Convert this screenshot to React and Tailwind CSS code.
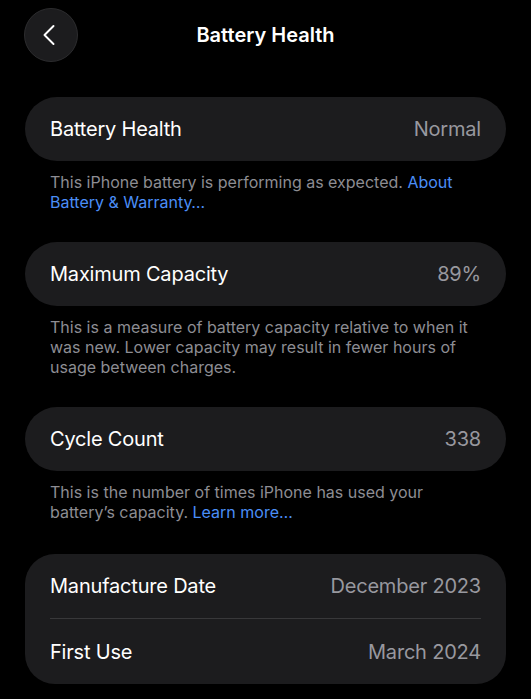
import { ChevronLeft } from 'lucide-react'

const font = { fontFamily: 'Inter, "Noto Sans", sans-serif' }

function Row({ label, value }) {
    return (
        <div className="flex items-center justify-between h-[64px] px-[25px]">
            <span className="text-[20px] text-white tracking-[-0.2px]">{label}</span>
            <span className="text-[20px] text-[#98989f] tracking-[-0.2px]">{value}</span>
        </div>
    )
}

function Footer({ children, last }) {
    return (
        <p className={`px-[25px] pt-[11px] text-[16px] leading-[20px] text-[#8d8d93] ${last ? 'pb-[32px]' : 'pb-[30px]'}`}>
            {children}
        </p>
    )
}

export default function App() {
    return (
        <div className="min-h-screen bg-black px-[25px]" style={font}>
            {/* HEADER */}
            <div className="relative flex items-center justify-center h-[70px]">
                <button className="absolute left-[-1px] top-[8px] w-[54px] h-[54px] rounded-full bg-[#1c1c1e] border border-[#2c2c2e] flex items-center justify-center">
                    <ChevronLeft className="text-white w-[36px] h-[36px] -ml-[4px]" strokeWidth={1.3} />
                </button>
                <h1 className="text-[20px] font-semibold text-white">Battery Health</h1>
            </div>

            <div className="pt-[27px]">
                <div className="bg-[#1c1c1e] rounded-full">
                    <Row label="Battery Health" value="Normal" />
                </div>
                <Footer>
                    This iPhone battery is performing as expected.{' '}
                    <span className="text-[#4b8ef7]">About Battery &amp; Warranty…</span>
                </Footer>

                <div className="bg-[#1c1c1e] rounded-full">
                    <Row label="Maximum Capacity" value="89%" />
                </div>
                <Footer>
                    This is a measure of battery capacity relative to when it was new. Lower capacity may result in fewer hours of usage between charges.
                </Footer>

                <div className="bg-[#1c1c1e] rounded-full">
                    <Row label="Cycle Count" value="338" />
                </div>
                <Footer last>
                    This is the number of times iPhone has used your battery’s capacity.{' '}
                    <span className="text-[#4b8ef7]">Learn more…</span>
                </Footer>

                <div className="bg-[#1c1c1e] rounded-[30px]">
                    <div className="h-[65px] flex items-center justify-between mx-[25px] border-b border-[#38383a]">
                        <span className="text-[20px] text-white tracking-[-0.2px]">Manufacture Date</span>
                        <span className="text-[20px] text-[#98989f] tracking-[-0.2px]">December 2023</span>
                    </div>
                    <div className="h-[65px] flex items-center justify-between mx-[25px]">
                        <span className="text-[20px] text-white tracking-[-0.2px]">First Use</span>
                        <span className="text-[20px] text-[#98989f] tracking-[-0.2px]">March 2024</span>
                    </div>
                </div>
            </div>
        </div>
    )
}
